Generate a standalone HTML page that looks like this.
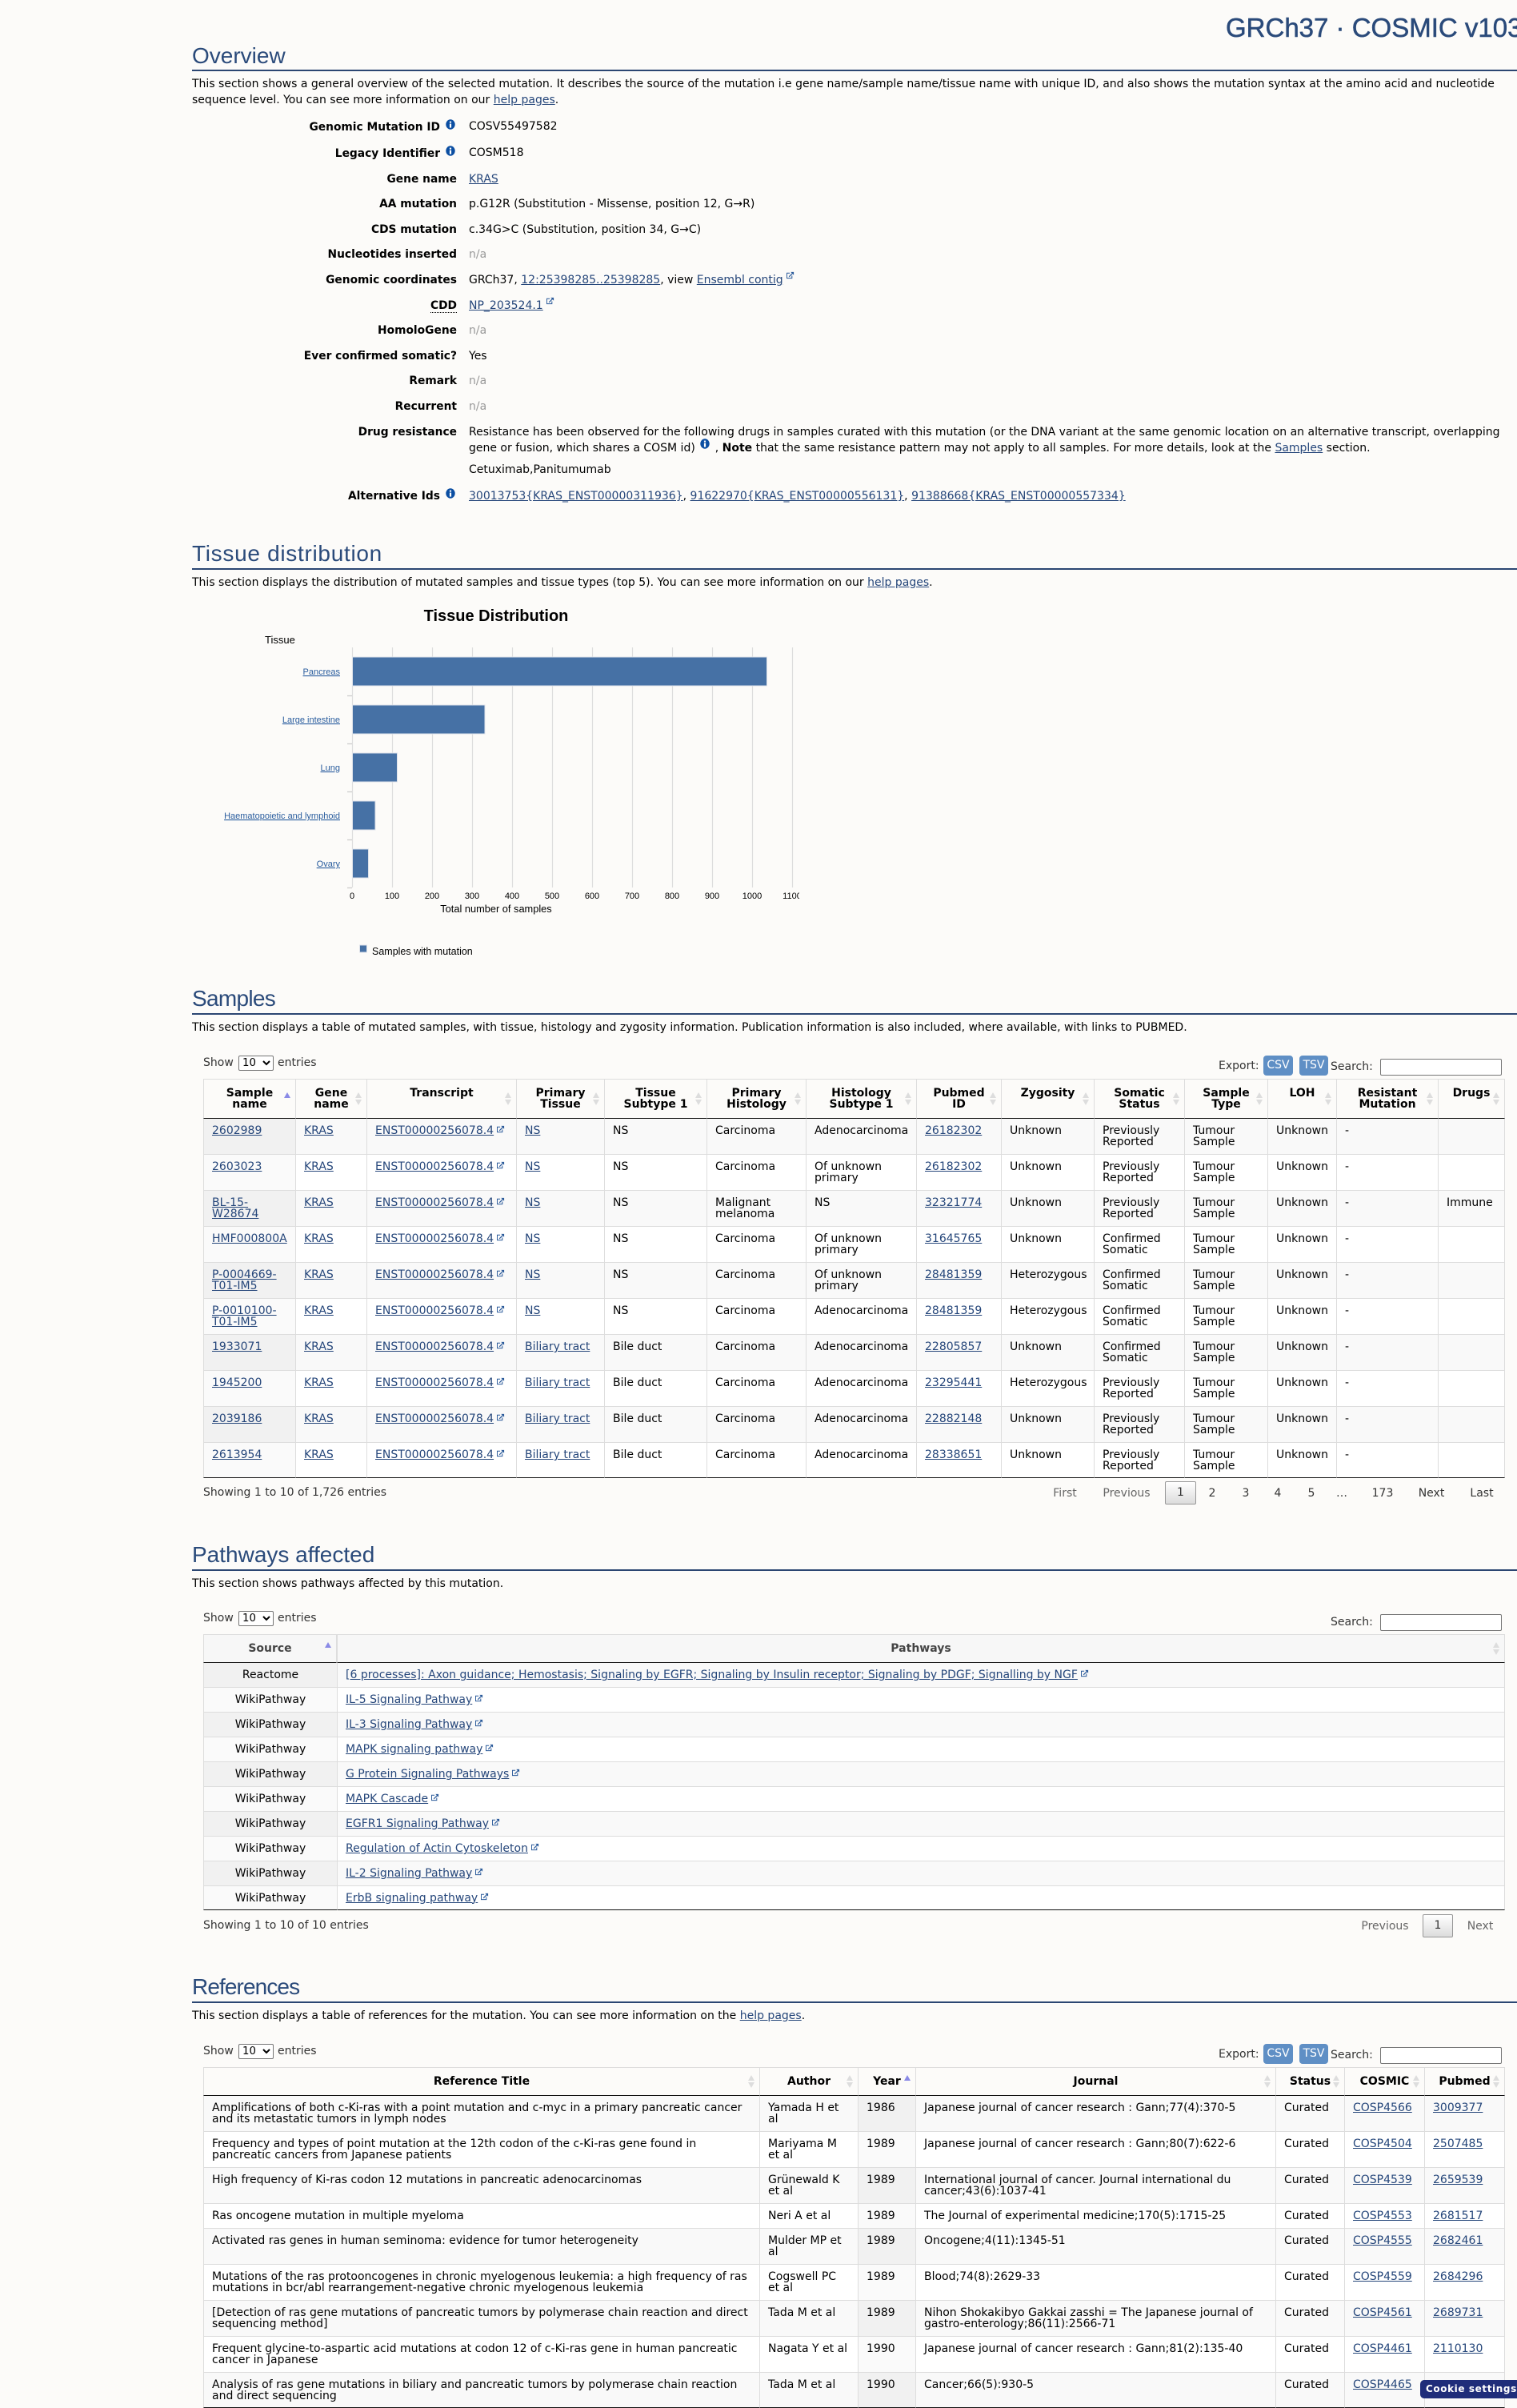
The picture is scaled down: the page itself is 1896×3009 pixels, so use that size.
<!DOCTYPE html>
<html><head><meta charset="utf-8"><title>COSMIC</title>
<style>
html,body{margin:0;padding:0;background:#fcfbf9}
body{position:relative;width:1896px;height:3000px;overflow:hidden;font:14px/20px "DejaVu Sans",Verdana,sans-serif;color:#000}
a{color:#25467a;text-decoration:underline}
.abs,.h,.ln,.d,.l,.v,.t{position:absolute;white-space:nowrap}
.h{left:240px;font:28px/32px "Liberation Sans",sans-serif;color:#2a4a7a}
.ln{left:240px;width:1656px;height:2px;background:#2b4672}
.d{left:240px}
.l{right:1325px;font-weight:bold;font-size:13.8px}
.l.i{right:1346px}
.v{left:586px}
.na{color:#999}
svg.e{width:10px;height:10px;margin-left:4px;position:relative;top:-1px;vertical-align:baseline}
.v svg.e{top:-5px}
svg.n{width:12px;height:13px;position:absolute}
.c{position:absolute;transform:translateX(-50%);color:#333;white-space:nowrap}
.c.g{color:#666}
.btn{position:absolute;width:37px;height:28px;box-sizing:border-box;border:1px solid #979797;border-radius:2px;background:linear-gradient(#fff,#dcdcdc);text-align:center;line-height:26px;color:#333}
.t{color:#333}
select{position:absolute;left:298px;width:44px;height:19px;font:13.3px "DejaVu Sans",sans-serif;padding:0;box-sizing:border-box;background:#fff;border:1px solid #767676;border-radius:2px;color:#000}
input{position:absolute;left:1725px;width:152px;box-sizing:border-box;border:1px solid #767676;border-radius:2px;background:#fff;padding:0}
.x{position:absolute;width:37px;height:25px;background:#5f8fc5;border-radius:4px;color:#fff;text-align:center;line-height:24px}
table{position:absolute;left:254px;width:1627px;table-layout:fixed;border-collapse:separate;border-spacing:0;line-height:14px}
th,td{border-left:1px solid #ddd;border-top:1px solid #ddd;padding:8px 10px 0;vertical-align:top;box-sizing:border-box;overflow:hidden}
th:last-child,td:last-child{border-right:1px solid #ddd}
th{position:relative;font-weight:bold;text-align:center;border-bottom:1px solid #111;padding-top:10px}
th::before,th::after{content:"";position:absolute;right:6px;top:50%;width:0;height:0;border-left:4px solid transparent;border-right:4px solid transparent}
th::before{margin-top:-8px;border-bottom:7px solid #ddd}
th::after{margin-top:1px;border-top:7px solid #ddd}
th.a::after{display:none}
th.a::before{border-bottom-color:#8a8ae6}
tbody tr:first-child td{border-top:0}
tbody tr:last-child td{border-bottom:1px solid #111}
tbody tr:nth-child(odd) td{background:#f9f9f9}
tbody tr:nth-child(even) td{background:#fff}
tbody tr:nth-child(odd) td.s{background:#f1f1f1}
tbody tr:nth-child(even) td.s{background:#fafafa}
.nw{white-space:nowrap}
tr.r{height:45px}
tr.f{height:44px}
#p th{background:#f7f7f7;color:#444;padding-top:0;vertical-align:middle}
#p td{vertical-align:middle;padding:0 10px;height:31px}
#p tr:first-child td{height:30px}
#p td.s{text-align:center}
#r th{padding-top:0;vertical-align:middle}
#ck{position:absolute;left:1775px;top:2974px;width:140px;height:23px;background:#1f2d7a;border-radius:5px;color:#fff;font:bold 12px/23px "DejaVu Sans",sans-serif;letter-spacing:.6px;padding-left:7px;box-sizing:border-box;white-space:nowrap}
</style></head><body>
<svg width="0" height="0" style="position:absolute"><defs>
<symbol id="ex" viewBox="0 0 11 11"><path d="M7.5 6v3.500h-7v-7h4" fill="none" stroke="#2a5a9a" stroke-width="1.100"/><path d="M3.500 7.500L8.500 2.500" fill="none" stroke="#2a5a9a" stroke-width="1.300"/><path d="M5.800 1h4.200v4.200z" fill="#2a5a9a"/></symbol>
<symbol id="in" viewBox="0 0 12 13"><ellipse cx="6" cy="6.5" rx="5.7" ry="6.2" fill="#0b4ea2"/><rect x="4.9" y="2.6" width="2.2" height="2" fill="#fff"/><rect x="4.9" y="5.6" width="2.2" height="5" fill="#fff"/></symbol>
</defs></svg>

<div class="abs" style="left:1532px;top:16px;font:33px/38px 'Liberation Sans',sans-serif;-webkit-text-stroke:.5px #2a4a7a;color:#2a4a7a;white-space:nowrap">GRCh37 · COSMIC v103</div>

<div class="h" style="top:54px">Overview</div><div class="ln" style="top:87px"></div>
<div class="d" style="top:95px">This section shows a general overview of the selected mutation. It describes the source of the mutation i.e gene name/sample name/tissue name with unique ID, and also shows the mutation syntax at the amino acid and nucleotide<br>sequence level. You can see more information on our <a>help pages</a>.</div>

<div class="l i" style="top:149px">Genomic Mutation ID</div><svg class="n" style="left:557px;top:149px"><use href="#in"/></svg><div class="v" style="top:148px">COSV55497582</div>
<div class="l i" style="top:182px">Legacy Identifier</div><svg class="n" style="left:557px;top:182px"><use href="#in"/></svg><div class="v" style="top:181px">COSM518</div>
<div class="l" style="top:214px">Gene name</div><div class="v" style="top:214px"><a>KRAS</a></div>
<div class="l" style="top:245px">AA mutation</div><div class="v" style="top:245px">p.G12R (Substitution - Missense, position 12, G→R)</div>
<div class="l" style="top:277px">CDS mutation</div><div class="v" style="top:277px">c.34G&gt;C (Substitution, position 34, G→C)</div>
<div class="l" style="top:308px">Nucleotides inserted</div><div class="v na" style="top:308px">n/a</div>
<div class="l" style="top:340px">Genomic coordinates</div><div class="v" style="top:340px">GRCh37, <a>12:25398285..25398285</a>, view <a>Ensembl contig</a><svg class="e"><use href="#ex"/></svg></div>
<div class="l" style="top:372px"><span style="border-bottom:1px dotted #000;line-height:15px;display:inline-block">CDD</span></div><div class="v" style="top:372px"><a>NP_203524.1</a><svg class="e"><use href="#ex"/></svg></div>
<div class="l" style="top:403px">HomoloGene</div><div class="v na" style="top:403px">n/a</div>
<div class="l" style="top:435px">Ever confirmed somatic?</div><div class="v" style="top:435px">Yes</div>
<div class="l" style="top:466px">Remark</div><div class="v na" style="top:466px">n/a</div>
<div class="l" style="top:498px">Recurrent</div><div class="v na" style="top:498px">n/a</div>
<div class="l" style="top:530px">Drug resistance</div>
<div class="v" style="top:530px">Resistance has been observed for the following drugs in samples curated with this mutation (or the DNA variant at the same genomic location on an alternative transcript, overlapping<br>gene or fusion, which shares a COSM id) <svg style="width:12px;height:13px;position:relative;top:-3px;margin:0 2px"><use href="#in"/></svg> , <b>Note</b> that the same resistance pattern may not apply to all samples. For more details, look at the <a>Samples</a> section.</div>
<div class="v" style="top:577px">Cetuximab,Panitumumab</div>
<div class="l i" style="top:610px">Alternative Ids</div><svg class="n" style="left:557px;top:610px"><use href="#in"/></svg>
<div class="v" style="top:610px"><a>30013753{KRAS_ENST00000311936}</a>, <a>91622970{KRAS_ENST00000556131}</a>, <a>91388668{KRAS_ENST00000557334}</a></div>

<div class="h" style="top:676px;letter-spacing:.7px">Tissue distribution</div><div class="ln" style="top:710px"></div>
<div class="d" style="top:718px">This section displays the distribution of mutated samples and tissue types (top 5). You can see more information on our <a>help pages</a>.</div>

<svg class="abs" style="left:0;top:740px" width="1000" height="460" viewBox="0 740 1000 460" font-family="Liberation Sans, sans-serif">
<text x="620" y="776" font-size="20" font-weight="bold" text-anchor="middle" fill="#000">Tissue Distribution</text>
<text x="331" y="804" font-size="13" fill="#000">Tissue</text>
<g stroke="#ddd" stroke-width="1.2">
<path d="M440.5 809V1109M490.5 809V1109M540.5 809V1109M590.5 809V1109M640.5 809V1109M690.5 809V1109M740.5 809V1109M790.5 809V1109M840.5 809V1109M890.5 809V1109M940.5 809V1109M990.5 809V1109"/>
</g>
<path d="M434 869.5h6M434 929.5h6M434 989.5h6M434 1049.5h6M434 1109.5h6" stroke="#ccc" stroke-width="1.2"/>
<g fill="#4671a5" stroke="#dfe3ea" stroke-width="1">
<rect x="440.5" y="821" width="518" height="36"/>
<rect x="440.5" y="881" width="165.500" height="36"/>
<rect x="440.5" y="941" width="56" height="36"/>
<rect x="440.500" y="1001" width="28.500" height="36"/>
<rect x="440.5" y="1061" width="20" height="36"/>
</g>
<g font-size="11" fill="#2a5d9e" text-anchor="end" text-decoration="underline">
<text x="425" y="843">Pancreas</text>
<text x="425" y="903">Large intestine</text>
<text x="425" y="963">Lung</text>
<text x="425" y="1023">Haematopoietic and lymphoid</text>
<text x="425" y="1083">Ovary</text>
</g>
<g font-size="11" fill="#000" text-anchor="middle">
<text x="440" y="1123">0</text><text x="490" y="1123">100</text><text x="540" y="1123">200</text><text x="590" y="1123">300</text><text x="640" y="1123">400</text><text x="690" y="1123">500</text><text x="740" y="1123">600</text><text x="790" y="1123">700</text><text x="840" y="1123">800</text><text x="890" y="1123">900</text><text x="940" y="1123">1000</text>
</g>
<svg x="970" y="1110" width="29" height="20" viewBox="970 1110 29 20"><text x="990" y="1123" font-size="11" text-anchor="middle" fill="#000">1100</text></svg>
<text x="620" y="1140" font-size="12.8" text-anchor="middle" fill="#000">Total number of samples</text>
<rect x="449.500" y="1181" width="9" height="9" fill="#4671a5" stroke="#dfe3ea"/>
<text x="465" y="1193" font-size="12.500" fill="#000">Samples with mutation</text>
</svg>

<div class="h" style="top:1232px;letter-spacing:-.7px">Samples</div><div class="ln" style="top:1266px"></div>
<div class="d" style="top:1274px">This section displays a table of mutated samples, with tissue, histology and zygosity information. Publication information is also included, where available, with links to PUBMED.</div>

<div class="t" style="left:254px;top:1318px">Show</div><select style="top:1319px"><option>10</option></select><div class="t" style="left:347px;top:1318px">entries</div>
<div class="t" style="left:1523px;top:1322px">Export:</div><div class="x" style="left:1579px;top:1319px">CSV</div><div class="x" style="left:1624px;top:1319px;width:36px">TSV</div><div class="t" style="left:1663px;top:1323px">Search:</div><input style="top:1323px;height:21px">

<table style="top:1348px">
<colgroup><col style="width:115px"><col style="width:89px"><col style="width:187px"><col style="width:110px"><col style="width:128px"><col style="width:124px"><col style="width:138px"><col style="width:106px"><col style="width:116px"><col style="width:113px"><col style="width:104px"><col style="width:86px"><col style="width:127px"><col style="width:84px"></colgroup>
<thead><tr style="height:50px"><th class="a">Sample<br>name</th><th>Gene<br>name</th><th style="vertical-align:top">Transcript</th><th>Primary<br>Tissue</th><th>Tissue<br>Subtype 1</th><th>Primary<br>Histology</th><th>Histology<br>Subtype 1</th><th>Pubmed<br>ID</th><th>Zygosity</th><th>Somatic<br>Status</th><th>Sample<br>Type</th><th>LOH</th><th>Resistant<br>Mutation</th><th>Drugs</th></tr></thead>
<tbody>
<tr class="f"><td class="s"><a>2602989</a></td><td><a>KRAS</a></td><td class="nw"><a>ENST00000256078.4</a><svg class="e"><use href="#ex"/></svg></td><td><a>NS</a></td><td>NS</td><td>Carcinoma</td><td class="nw">Adenocarcinoma</td><td><a>26182302</a></td><td>Unknown</td><td>Previously Reported</td><td>Tumour Sample</td><td>Unknown</td><td>-</td><td></td></tr>
<tr class="r"><td class="s"><a>2603023</a></td><td><a>KRAS</a></td><td class="nw"><a>ENST00000256078.4</a><svg class="e"><use href="#ex"/></svg></td><td><a>NS</a></td><td>NS</td><td>Carcinoma</td><td>Of unknown primary</td><td><a>26182302</a></td><td>Unknown</td><td>Previously Reported</td><td>Tumour Sample</td><td>Unknown</td><td>-</td><td></td></tr>
<tr class="r"><td class="s"><a>BL-15-<br>W28674</a></td><td><a>KRAS</a></td><td class="nw"><a>ENST00000256078.4</a><svg class="e"><use href="#ex"/></svg></td><td><a>NS</a></td><td>NS</td><td>Malignant melanoma</td><td>NS</td><td><a>32321774</a></td><td>Unknown</td><td>Previously Reported</td><td>Tumour Sample</td><td>Unknown</td><td>-</td><td>Immune</td></tr>
<tr class="r"><td class="s nw"><a>HMF000800A</a></td><td><a>KRAS</a></td><td class="nw"><a>ENST00000256078.4</a><svg class="e"><use href="#ex"/></svg></td><td><a>NS</a></td><td>NS</td><td>Carcinoma</td><td>Of unknown primary</td><td><a>31645765</a></td><td>Unknown</td><td>Confirmed Somatic</td><td>Tumour Sample</td><td>Unknown</td><td>-</td><td></td></tr>
<tr class="r"><td class="s"><a>P-0004669-<br>T01-IM5</a></td><td><a>KRAS</a></td><td class="nw"><a>ENST00000256078.4</a><svg class="e"><use href="#ex"/></svg></td><td><a>NS</a></td><td>NS</td><td>Carcinoma</td><td>Of unknown primary</td><td><a>28481359</a></td><td class="nw">Heterozygous</td><td>Confirmed Somatic</td><td>Tumour Sample</td><td>Unknown</td><td>-</td><td></td></tr>
<tr class="r"><td class="s"><a>P-0010100-<br>T01-IM5</a></td><td><a>KRAS</a></td><td class="nw"><a>ENST00000256078.4</a><svg class="e"><use href="#ex"/></svg></td><td><a>NS</a></td><td>NS</td><td>Carcinoma</td><td class="nw">Adenocarcinoma</td><td><a>28481359</a></td><td class="nw">Heterozygous</td><td>Confirmed Somatic</td><td>Tumour Sample</td><td>Unknown</td><td>-</td><td></td></tr>
<tr class="r"><td class="s"><a>1933071</a></td><td><a>KRAS</a></td><td class="nw"><a>ENST00000256078.4</a><svg class="e"><use href="#ex"/></svg></td><td class="nw"><a>Biliary tract</a></td><td>Bile duct</td><td>Carcinoma</td><td class="nw">Adenocarcinoma</td><td><a>22805857</a></td><td>Unknown</td><td>Confirmed Somatic</td><td>Tumour Sample</td><td>Unknown</td><td>-</td><td></td></tr>
<tr class="r"><td class="s"><a>1945200</a></td><td><a>KRAS</a></td><td class="nw"><a>ENST00000256078.4</a><svg class="e"><use href="#ex"/></svg></td><td class="nw"><a>Biliary tract</a></td><td>Bile duct</td><td>Carcinoma</td><td class="nw">Adenocarcinoma</td><td><a>23295441</a></td><td class="nw">Heterozygous</td><td>Previously Reported</td><td>Tumour Sample</td><td>Unknown</td><td>-</td><td></td></tr>
<tr class="r"><td class="s"><a>2039186</a></td><td><a>KRAS</a></td><td class="nw"><a>ENST00000256078.4</a><svg class="e"><use href="#ex"/></svg></td><td class="nw"><a>Biliary tract</a></td><td>Bile duct</td><td>Carcinoma</td><td class="nw">Adenocarcinoma</td><td><a>22882148</a></td><td>Unknown</td><td>Previously Reported</td><td>Tumour Sample</td><td>Unknown</td><td>-</td><td></td></tr>
<tr class="r"><td class="s"><a>2613954</a></td><td><a>KRAS</a></td><td class="nw"><a>ENST00000256078.4</a><svg class="e"><use href="#ex"/></svg></td><td class="nw"><a>Biliary tract</a></td><td>Bile duct</td><td>Carcinoma</td><td class="nw">Adenocarcinoma</td><td><a>28338651</a></td><td>Unknown</td><td>Previously Reported</td><td>Tumour Sample</td><td>Unknown</td><td>-</td><td></td></tr>
</tbody></table>

<div class="t" style="left:254px;top:1855px">Showing 1 to 10 of 1,726 entries</div>
<span class="c g" style="left:1331px;top:1856px">First</span><span class="c g" style="left:1408px;top:1856px">Previous</span><div class="btn" style="left:1456px;top:1851px;width:39px;height:29px">1</div><span class="c" style="left:1515px;top:1856px">2</span><span class="c" style="left:1557px;top:1856px">3</span><span class="c" style="left:1597px;top:1856px">4</span><span class="c" style="left:1639px;top:1856px">5</span><span class="c" style="left:1677px;top:1856px">…</span><span class="c" style="left:1728px;top:1856px">173</span><span class="c" style="left:1789px;top:1856px">Next</span><span class="c" style="left:1852px;top:1856px">Last</span>

<div class="h" style="top:1927px">Pathways affected</div><div class="ln" style="top:1961px"></div>
<div class="d" style="top:1969px">This section shows pathways affected by this mutation.</div>

<div class="t" style="left:254px;top:2012px">Show</div><select style="top:2013px"><option>10</option></select><div class="t" style="left:347px;top:2012px">entries</div>
<div class="t" style="left:1663px;top:2017px">Search:</div><input style="top:2017px;height:21px">

<table id="p" style="top:2042px">
<colgroup><col style="width:167px"><col style="width:1460px"></colgroup>
<thead><tr style="height:36px"><th class="a" style="border-right:1px solid #ddd">Source</th><th>Pathways</th></tr></thead>
<tbody>
<tr><td class="s">Reactome</td><td><a>[6 processes]: Axon guidance; Hemostasis; Signaling by EGFR; Signaling by Insulin receptor; Signaling by PDGF; Signalling by NGF</a><svg class="e"><use href="#ex"/></svg></td></tr>
<tr><td class="s">WikiPathway</td><td><a>IL-5 Signaling Pathway</a><svg class="e"><use href="#ex"/></svg></td></tr>
<tr><td class="s">WikiPathway</td><td><a>IL-3 Signaling Pathway</a><svg class="e"><use href="#ex"/></svg></td></tr>
<tr><td class="s">WikiPathway</td><td><a>MAPK signaling pathway</a><svg class="e"><use href="#ex"/></svg></td></tr>
<tr><td class="s">WikiPathway</td><td><a>G Protein Signaling Pathways</a><svg class="e"><use href="#ex"/></svg></td></tr>
<tr><td class="s">WikiPathway</td><td><a>MAPK Cascade</a><svg class="e"><use href="#ex"/></svg></td></tr>
<tr><td class="s">WikiPathway</td><td><a>EGFR1 Signaling Pathway</a><svg class="e"><use href="#ex"/></svg></td></tr>
<tr><td class="s">WikiPathway</td><td><a>Regulation of Actin Cytoskeleton</a><svg class="e"><use href="#ex"/></svg></td></tr>
<tr><td class="s">WikiPathway</td><td><a>IL-2 Signaling Pathway</a><svg class="e"><use href="#ex"/></svg></td></tr>
<tr><td class="s">WikiPathway</td><td><a>ErbB signaling pathway</a><svg class="e"><use href="#ex"/></svg></td></tr>
</tbody></table>

<div class="t" style="left:254px;top:2396px">Showing 1 to 10 of 10 entries</div>
<span class="c g" style="left:1731px;top:2397px">Previous</span><div class="btn" style="left:1778px;top:2392px;width:38px;height:29px">1</div><span class="c g" style="left:1850px;top:2397px">Next</span>

<div class="h" style="top:2467px;letter-spacing:-.9px">References</div><div class="ln" style="top:2501px"></div>
<div class="d" style="top:2509px">This section displays a table of references for the mutation. You can see more information on the <a>help pages</a>.</div>

<div class="t" style="left:254px;top:2553px">Show</div><select style="top:2554px"><option>10</option></select><div class="t" style="left:347px;top:2553px">entries</div>
<div class="t" style="left:1523px;top:2557px">Export:</div><div class="x" style="left:1579px;top:2554px">CSV</div><div class="x" style="left:1624px;top:2554px;width:36px">TSV</div><div class="t" style="left:1663px;top:2558px">Search:</div><input style="top:2558px;height:21px">

<table id="r" style="top:2583px">
<colgroup><col style="width:695px"><col style="width:123px"><col style="width:72px"><col style="width:450px"><col style="width:86px"><col style="width:100px"><col style="width:101px"></colgroup>
<thead><tr style="height:36px"><th>Reference Title</th><th>Author</th><th class="a">Year</th><th>Journal</th><th>Status</th><th>COSMIC</th><th>Pubmed</th></tr></thead>
<tbody>
<tr class="f"><td>Amplifications of both c-Ki-ras with a point mutation and c-myc in a primary pancreatic cancer and its metastatic tumors in lymph nodes</td><td>Yamada H et al</td><td class="s">1986</td><td>Japanese journal of cancer research : Gann;77(4):370-5</td><td>Curated</td><td><a>COSP4566</a></td><td><a>3009377</a></td></tr>
<tr class="r"><td>Frequency and types of point mutation at the 12th codon of the c-Ki-ras gene found in pancreatic cancers from Japanese patients</td><td>Mariyama M et al</td><td class="s">1989</td><td>Japanese journal of cancer research : Gann;80(7):622-6</td><td>Curated</td><td><a>COSP4504</a></td><td><a>2507485</a></td></tr>
<tr class="r"><td>High frequency of Ki-ras codon 12 mutations in pancreatic adenocarcinomas</td><td>Grünewald K et al</td><td class="s">1989</td><td>International journal of cancer. Journal international du cancer;43(6):1037-41</td><td>Curated</td><td><a>COSP4539</a></td><td><a>2659539</a></td></tr>
<tr style="height:31px"><td>Ras oncogene mutation in multiple myeloma</td><td class="nw">Neri A et al</td><td class="s">1989</td><td>The Journal of experimental medicine;170(5):1715-25</td><td>Curated</td><td><a>COSP4553</a></td><td><a>2681517</a></td></tr>
<tr class="r"><td>Activated ras genes in human seminoma: evidence for tumor heterogeneity</td><td>Mulder MP et al</td><td class="s">1989</td><td>Oncogene;4(11):1345-51</td><td>Curated</td><td><a>COSP4555</a></td><td><a>2682461</a></td></tr>
<tr class="r"><td>Mutations of the ras protooncogenes in chronic myelogenous leukemia: a high frequency of ras mutations in bcr/abl rearrangement-negative chronic myelogenous leukemia</td><td>Cogswell PC et al</td><td class="s">1989</td><td>Blood;74(8):2629-33</td><td>Curated</td><td><a>COSP4559</a></td><td><a>2684296</a></td></tr>
<tr class="r"><td>[Detection of ras gene mutations of pancreatic tumors by polymerase chain reaction and direct sequencing method]</td><td class="nw">Tada M et al</td><td class="s">1989</td><td>Nihon Shokakibyo Gakkai zasshi = The Japanese journal of gastro-enterology;86(11):2566-71</td><td>Curated</td><td><a>COSP4561</a></td><td><a>2689731</a></td></tr>
<tr class="r"><td>Frequent glycine-to-aspartic acid mutations at codon 12 of c-Ki-ras gene in human pancreatic cancer in Japanese</td><td class="nw">Nagata Y et al</td><td class="s">1990</td><td>Japanese journal of cancer research : Gann;81(2):135-40</td><td>Curated</td><td><a>COSP4461</a></td><td><a>2110130</a></td></tr>
<tr class="r"><td>Analysis of ras gene mutations in biliary and pancreatic tumors by polymerase chain reaction and direct sequencing</td><td class="nw">Tada M et al</td><td class="s">1990</td><td>Cancer;66(5):930-5</td><td>Curated</td><td><a>COSP4465</a></td><td></td></tr>
</tbody></table>

<div id="ck">Cookie settings</div>
</body></html>
